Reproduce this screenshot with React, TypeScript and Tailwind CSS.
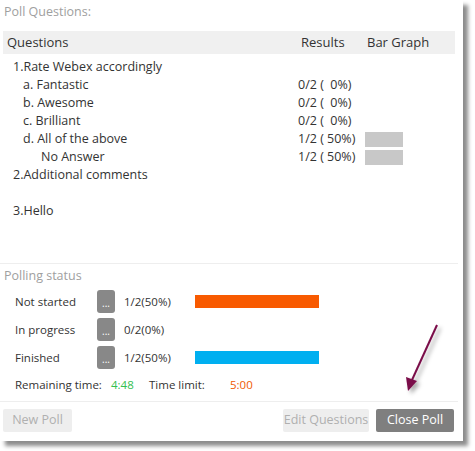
import React from "react";

const rows = [
  { q: "1.Rate Webex accordingly", indent: "pl-[10px]", r: "", bar: false },
  { q: "a. Fantastic", indent: "pl-[20px]", r: "0/2 (  0%)", bar: false },
  { q: "b. Awesome", indent: "pl-[20px]", r: "0/2 (  0%)", bar: false },
  { q: "c. Brilliant", indent: "pl-[20px]", r: "0/2 (  0%)", bar: false },
  { q: "d. All of the above", indent: "pl-[20px]", r: "1/2 ( 50%)", bar: true },
  { q: "No Answer", indent: "pl-[38px]", r: "1/2 ( 50%)", bar: true },
  { q: "2.Additional comments", indent: "pl-[10px]", r: "", bar: false },
  { q: "", indent: "pl-[10px]", r: "", bar: false },
  { q: "3.Hello", indent: "pl-[10px]", r: "", bar: false },
];

const status = [
  { label: "Not started", value: "1/2(50%)", bar: "bg-[#f85a00]" },
  { label: "In progress", value: "0/2(0%)", bar: "" },
  { label: "Finished", value: "1/2(50%)", bar: "bg-[#00aff0]" },
];

export default function App() {
  return (
    <div className="relative w-[475px] h-[451px] bg-white font-['Open_Sans','Noto_Sans',sans-serif] text-[#333]">
      <div className="w-[463px] h-[441px] bg-white shadow-[5px_5px_4px_rgba(0,0,0,0.45)] flex flex-col">
        {/* questions */}
        <div className="h-[31px] pl-[4px] pt-[3px] text-[12.5px] leading-[18px] text-[#a0a0a0]">
          Poll Questions:
        </div>
        <div className="mx-[3px] w-[452px] h-[23px] bg-[#f0f0f0] flex items-center text-[13px]">
          <span className="pl-[4px] w-[298px]">Questions</span>
          <span className="w-[66px]">Results</span>
          <span>Bar Graph</span>
        </div>
        <div className="pt-[4px] pl-[3px] text-[12.5px]">
          {rows.map((row, i) => (
            <div key={i} className="h-[18px] flex items-center">
              <span className={`w-[295px] ${row.indent}`}>{row.q}</span>
              <span className="w-[67px] whitespace-pre">{row.r}</span>
              {row.bar && <span className="w-[38px] h-[15px] bg-[#c8c8c8]" />}
            </div>
          ))}
        </div>

        {/* polling status */}
        <div className="mt-[43px] w-[458px] border-t border-[#eeeeee] pl-[4px] pt-[3px] h-[27px] text-[12.5px] leading-[18px] text-[#a0a0a0]">
          Polling status
        </div>
        <div className="flex flex-col gap-[5px] text-[11.5px]">
          {status.map((s) => (
            <div key={s.label} className="h-[23px] flex items-center">
              <span className="pl-[15px] w-[97px]">{s.label}</span>
              <span className="w-[18px] h-[23px] rounded-[3px] bg-[#888888] text-white text-[10px] flex items-end justify-center pb-[5px] leading-none">
                ...
              </span>
              <span className="pl-[9px] w-[80px]">{s.value}</span>
              {s.bar && <span className={`w-[124px] h-[13px] ${s.bar}`} />}
            </div>
          ))}
        </div>
        <div className="h-[28px] flex items-center text-[11.5px] pt-[4px]">
          <span className="pl-[15px] w-[111px]">Remaining time:</span>
          <span className="w-[38px] text-[#33c050]">4:48</span>
          <span className="w-[81px]">Time limit:</span>
          <span className="text-[#f05a00]">5:00</span>
        </div>

        {/* footer */}
        <div className="mt-[4px] w-[458px] border-t border-[#eeeeee] pt-[7px] px-[3px] flex items-center text-[12.5px]">
          <button className="w-[69px] h-[23px] rounded-[2px] bg-[#eeeeee] text-[#b0b0b0]">New Poll</button>
          <button className="ml-auto w-[86px] h-[23px] rounded-[2px] bg-[#eeeeee] text-[#b0b0b0]">Edit Questions</button>
          <button className="ml-[7px] mr-[1px] w-[78px] h-[23px] rounded-[2px] bg-[#7f7f7f] text-white">Close Poll</button>
        </div>
      </div>

      {/* annotation arrow */}
      <svg className="absolute left-[400px] top-[320px] overflow-visible" width="45" height="80" viewBox="0 0 45 80">
        <defs>
          <filter id="sh" x="-50%" y="-50%" width="200%" height="200%">
            <feDropShadow dx="3" dy="3" stdDeviation="2" floodColor="#000" floodOpacity="0.35" />
          </filter>
        </defs>
        <g filter="url(#sh)">
          <line x1="37" y1="5" x2="12" y2="60" stroke="#7a0b48" strokeWidth="2" />
          <polygon points="8,71 6,57 17,61" fill="#7a0b48" />
        </g>
      </svg>
    </div>
  );
}
